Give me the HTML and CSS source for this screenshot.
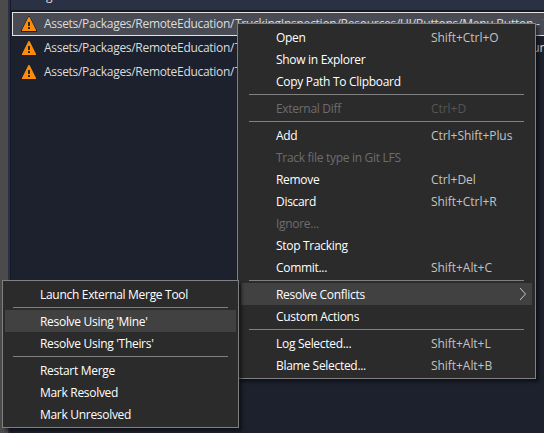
FILE: index.html
```
<!DOCTYPE html>
<html lang="en">
<head>
<meta charset="utf-8">
<title>Pending changes</title>
<link rel="stylesheet" href="styles.css">
</head>
<body>
<svg class="defs" width="0" height="0">
  <symbol id="warning" viewBox="0 0 16 16">
    <path d="M8 1 15.2 15H.8Z" fill="#ff8c0a" stroke="#1b2130" stroke-width="2" stroke-linejoin="round"/>
    <path d="M8 1.6 14.4 14.4H1.6Z" fill="#ff8c0a" stroke="#ff8c0a" stroke-width="1.4" stroke-linejoin="round"/>
    <path d="M7 6h2v4H7zM7 11h2v2H7z" fill="#252c36"/>
  </symbol>
</svg>
<div class="app">
  <div class="gutter"></div>
  <main class="panel">
    <header class="head"><span class="title">g</span></header>
    <div class="row selected"><svg class="warn"><use href="#warning"/></svg><span class="path">Assets/Packages/RemoteEducation/</span><span class="rest">TruckingInspection/Resources/UI/Buttons/Menu Button - </span><span class="tail">T</span></div>
    <div class="row"><svg class="warn"><use href="#warning"/></svg><span class="path">Assets/Packages/RemoteEducation/</span><span class="rest">T</span><span class="end">un</span></div>
    <div class="row"><svg class="warn"><use href="#warning"/></svg><span class="path">Assets/Packages/RemoteEducation/</span><span class="rest">T</span></div>
  </main>
</div>

<div class="menu context">
  <div class="item"><span>Open</span><kbd>Shift+Ctrl+O</kbd></div>
  <div class="item"><span>Show in Explorer</span></div>
  <div class="item"><span>Copy Path To Clipboard</span></div>
  <div class="sep"></div>
  <div class="item disabled"><span>External Diff</span><kbd>Ctrl+D</kbd></div>
  <div class="sep"></div>
  <div class="item"><span>Add</span><kbd>Ctrl+Shift+Plus</kbd></div>
  <div class="item disabled"><span>Track file type in Git LFS</span></div>
  <div class="item"><span>Remove</span><kbd>Ctrl+Del</kbd></div>
  <div class="item"><span>Discard</span><kbd>Shift+Ctrl+R</kbd></div>
  <div class="item disabled"><span>Ignore...</span></div>
  <div class="item"><span>Stop Tracking</span></div>
  <div class="item"><span>Commit...</span><kbd>Shift+Alt+C</kbd></div>
  <div class="sep"></div>
  <div class="item active"><span>Resolve Conflicts</span><svg class="chevron" viewBox="0 0 8 14"><path d="M1 1 6.5 7 1 13" fill="none" stroke="#c8c8c8"/></svg></div>
  <div class="item"><span>Custom Actions</span></div>
  <div class="sep"></div>
  <div class="item"><span>Log Selected...</span><kbd>Shift+Alt+L</kbd></div>
  <div class="item"><span>Blame Selected...</span><kbd>Shift+Alt+B</kbd></div>
</div>

<div class="menu submenu">
  <div class="item"><span>Launch External Merge Tool</span></div>
  <div class="sep"></div>
  <div class="item active"><span>Resolve Using 'Mine'</span></div>
  <div class="item"><span>Resolve Using 'Theirs'</span></div>
  <div class="sep"></div>
  <div class="item"><span>Restart Merge</span></div>
  <div class="item"><span>Mark Resolved</span></div>
  <div class="item"><span>Mark Unresolved</span></div>
</div>
</body>
</html>
```
FILE: styles.css
```
* { box-sizing: border-box; }
body {
  margin: 0;
  width: 544px;
  height: 433px;
  overflow: hidden;
  position: relative;
  background: #1c212d;
  font: 12px/22px "Open Sans", "Noto Sans", sans-serif;
  letter-spacing: -0.3px;
  color: #fff;
}
.defs { position: absolute; }
.app { display: flex; height: 433px; }
.gutter { width: 10px; flex: none; background: #4b4b4b; border-right: 2px solid #293048; }
.panel { flex: 1; min-width: 0; border-left: 1px solid #151a23; overflow: hidden; }
.head { height: 12px; background: #2a3145; border-bottom: 2px solid #141a22; overflow: hidden; display: flex; align-items: flex-end; padding-left: 35px; color: #dcdcdc; }
.title { line-height: 16px; margin-bottom: 6px; }
.row {
  display: flex;
  align-items: center;
  height: 24px;
  margin-left: 1px;
  width: 560px;
  padding-left: 8px;
  border: 1px solid transparent;
  white-space: pre;
  color: #dcdcdc;
}
.row.selected { background: #484b54; border-color: #e3e3e3; }
.warn { width: 16px; height: 16px; flex: none; margin-right: 7px; }
.path { width: 191px; flex: none; }
.rest { letter-spacing: -0.25px; }
.tail { color: #5656b8; }
.end { margin-left: 291px; }
.menu {
  position: absolute;
  background: #2b2b2b;
  border: 1px solid #808080;
  box-shadow: 3px 3px 3px rgba(0, 0, 0, .45);
}
.context { left: 237px; top: 23px; width: 299px; padding: 2px 3px; }
.submenu { left: 2px; top: 280px; width: 237px; padding: 2px; }
.item { display: flex; align-items: center; height: 22px; padding-left: 35px; position: relative; white-space: pre; }
.item > span { line-height: 22px; padding-top: 1px; }
.item.active { background: #414141; }
kbd { font: inherit; padding-top: 1px; position: absolute; left: 190px; color: #c3c3c3; letter-spacing: -0.05px; }
.disabled { color: #6d6d6d; }
.disabled kbd { color: #555; }
.sep { height: 1px; margin: 2px 8px; background: #808080; }
.chevron { width: 8px; height: 14px; margin-left: auto; margin-right: 5px; }
```
